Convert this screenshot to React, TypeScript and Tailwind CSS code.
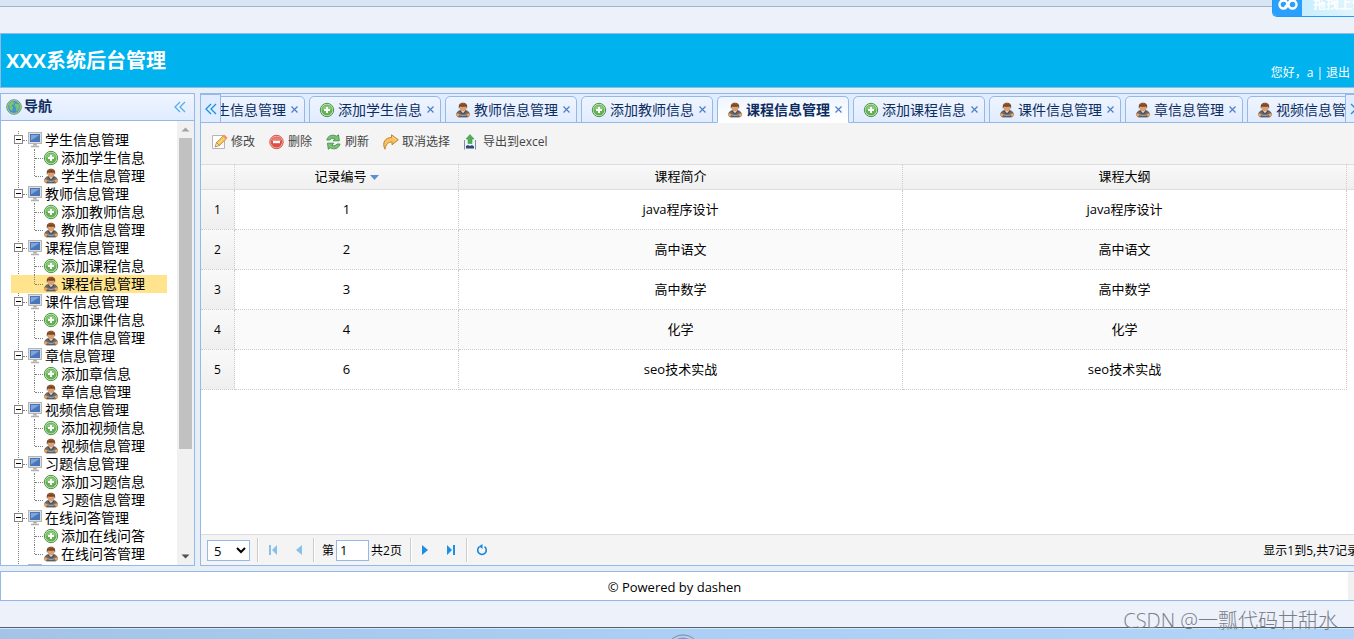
import { useState } from "react";

const groups = [
  { title: "学生信息管理", items: ["添加学生信息", "学生信息管理"] },
  { title: "教师信息管理", items: ["添加教师信息", "教师信息管理"] },
  { title: "课程信息管理", items: ["添加课程信息", "课程信息管理"] },
  { title: "课件信息管理", items: ["添加课件信息", "课件信息管理"] },
  { title: "章信息管理", items: ["添加章信息", "章信息管理"] },
  { title: "视频信息管理", items: ["添加视频信息", "视频信息管理"] },
  { title: "习题信息管理", items: ["添加习题信息", "习题信息管理"] },
  { title: "在线问答管理", items: ["添加在线问答", "在线问答管理"] },
];

const tabs = [
  "学生信息管理",
  "添加学生信息",
  "教师信息管理",
  "添加教师信息",
  "课程信息管理",
  "添加课程信息",
  "课件信息管理",
  "章信息管理",
  "视频信息管理",
];

const rows = [
  { id: 1, name: "java程序设计" },
  { id: 2, name: "高中语文" },
  { id: 3, name: "高中数学" },
  { id: 4, name: "化学" },
  { id: 6, name: "seo技术实战" },
];

function AddIcon() {
  return (
    <svg width="16" height="16" viewBox="0 0 16 16" className="shrink-0">
      <circle cx="8" cy="8" r="6.7" fill="#d5ecca" stroke="#4f9446" />
      <circle cx="8" cy="8" r="5.6" fill="#62b254" />
      <path d="M3 7.500a5.100 5.100 0 0 1 10 0z" fill="#8acb7b" />
      <path d="M8 5v6M5 8h6" stroke="#fff" strokeWidth="2" />
    </svg>
  );
}

function UserIcon() {
  return (
    <svg width="16" height="16" viewBox="0 0 16 16" className="shrink-0">
      <path d="M1.500 13.500c-.2-2.500 1-4.200 3.500-5h6c2.500.8 3.700 2.500 3.500 5l-2 1.500h-9z" fill="#6a6a6c" stroke="#47474a" strokeWidth=".7" />
      <path d="M5.800 8.500L8 11l2.200-2.500z" fill="#f2f2f2" />
      <path d="M5 9l2.500 3M11 9l-2.500 3" stroke="#3b3b3e" strokeWidth=".8" />
      <path d="M4 12.500c2.500 1.300 5.500 1.300 8 0" stroke="#a2a2a5" fill="none" />
      <circle cx="2.500" cy="13" r="1.700" fill="#e8a05c" />
      <circle cx="13.500" cy="13" r="1.700" fill="#e8a05c" />
      <path d="M4.800 4h6.400v2.500c0 1.700-1.300 3-3.200 3s-3.200-1.300-3.200-3z" fill="#d9a077" />
      <path d="M4 7C3.200 3 4.500.8 8 .8S12.800 3 12 7l-1-2.500c-2 .4-4 .4-6 0z" fill="#7b4520" />
      <path d="M5.500 2.500c1.500-1 3.500-1 5 0" stroke="#a1683b" fill="none" />
    </svg>
  );
}

function ComputerIcon() {
  return (
    <svg width="16" height="16" viewBox="0 0 16 16" className="shrink-0">
      <rect x=".5" y=".5" width="13" height="11" fill="#dedede" stroke="#b6b6b6" />
      <rect x="2" y="2" width="10" height="8" fill="#4876bb" />
      <path d="M3 3h8.500L3 8.500z" fill="#7fa4da" />
      <path d="M5.500 12h3l.7 1.500H4.800z" fill="#aaa" />
      <path d="M3 14.500h8" stroke="#b0b0b0" strokeWidth="1.500" />
    </svg>
  );
}

function GlobeIcon() {
  return (
    <svg width="16" height="16" viewBox="0 0 16 16" className="shrink-0">
      <circle cx="8" cy="8" r="7.300" fill="#9fc9a0" stroke="#6a9f73" />
      <circle cx="8" cy="8" r="5.900" fill="#4690cd" />
      <path d="M3 5l3-2.500 2.500.5-1 2.500-2 1 1.500 2-1 3.500L3.500 10z" fill="#7ec46c" />
      <path d="M9 4.500l3.500.5 1 3.500-2.500 4-1.500-1.500 1-2-2-2z" fill="#7ec46c" />
    </svg>
  );
}

function EditIcon() {
  return (
    <svg width="16" height="16" viewBox="0 0 16 16">
      <path d="M.5 1.500h12v13H.5z" fill="#fdfdfd" stroke="#b5b5b5" />
      <path d="M4.500 8.500l7-6.800 3 3-7 6.800z" fill="#f6c44f" stroke="#c98a2a" strokeWidth=".8" />
      <path d="M6 10l7-6.800" stroke="#fbe29b" strokeWidth=".9" />
      <path d="M11 2.200l1.500-1.400 3 3L14 5.200z" fill="#ea8f72" />
      <path d="M4.500 8.500L3 13l4.500-1.500z" fill="#f7e0b5" stroke="#8d6734" strokeWidth=".6" />
    </svg>
  );
}

function RemoveIcon() {
  return (
    <svg width="16" height="16" viewBox="0 0 16 16">
      <circle cx="7.500" cy="8" r="6.700" fill="#f6c3bd" stroke="#cf5147" />
      <circle cx="7.500" cy="8" r="5.600" fill="#dc4f43" />
      <path d="M2.500 7a5.200 5.200 0 0 1 10 0z" fill="#ea7d73" />
      <path d="M4 8h7" stroke="#fff" strokeWidth="2.400" />
    </svg>
  );
}

function ReloadIcon() {
  return (
    <svg width="16" height="16" viewBox="0 0 16 16" fill="#7cc474" stroke="#3f8f4a" strokeWidth=".9" strokeLinejoin="round">
      <path d="M.8 6C1.800 1.500 6.500 0 10.500 2.200L12.500.8l.8 6H7.200l1.700-2.200C6.700 3.700 4.700 4.300 3.800 6z" />
      <path d="M14 10c-1 4.500-5.700 6-9.700 3.800l-2 1.400-.8-6h6.100l-1.700 2.200c2.200.9 4.200.3 5.100-1.400z" />
    </svg>
  );
}

function RedoIcon() {
  return (
    <svg width="16" height="16" viewBox="0 0 16 16">
      <path d="M8.500.8l6.800 5-6.300 5V8C5.500 7.800 2.500 10.500 2 15.200-1.500 8.500 2.500 3.500 8.500 3.500z" fill="#f9c05c" stroke="#b97a26" strokeWidth=".9" strokeLinejoin="round" />
      <path d="M9.500 3l3.500 2.800" stroke="#fde3ab" />
    </svg>
  );
}

function ExportIcon() {
  return (
    <svg width="16" height="16" viewBox="0 0 16 16">
      <path d="M1 6v9h10V6" fill="#eef3f8" />
      <path d="M.5 6v9.500M11.500 6v9.500" stroke="#7d8fa3" />
      <path d="M2 14.500v-2.500l2-1 2 1 2-1 2 1.500v2z" fill="#2f4a78" />
      <path d="M6 .5l4 4.500H8V9.500H4V5H2z" fill="#4fb052" stroke="#378a40" strokeWidth=".5" />
    </svg>
  );
}

function Chevrons({ flip = false }: { flip?: boolean }) {
  return (
    <svg width="12" height="12" viewBox="0 0 12 12" className="shrink-0" fill="none" stroke="#1e90e0" strokeWidth="1.300">
      {flip ? <path d="M1 1l5 5-5 5M6 1l5 5-5 5" /> : <path d="M6 1L1 6l5 5M11 1L6 6l5 5" />}
    </svg>
  );
}

const tools = [
  { label: "修改", icon: <EditIcon /> },
  { label: "删除", icon: <RemoveIcon /> },
  { label: "刷新", icon: <ReloadIcon /> },
  { label: "取消选择", icon: <RedoIcon /> },
  { label: "导出到excel", icon: <ExportIcon /> },
];

function Sidebar({ active, onOpen }: { active: string; onOpen: (name: string) => void }) {
  return (
    <aside className="flex w-[195px] shrink-0 flex-col border border-[#95b8e7] bg-white">
      <div className="flex h-[27px] shrink-0 items-center gap-[2px] border-b border-[#95b8e7] bg-linear-to-b from-[#eff5ff] to-[#e0ecff] pr-2 pl-[5px]">
        <GlobeIcon />
        <h2 className="flex-1 pb-[2px] text-[14px] leading-5 font-bold text-[#0e2d5f]">导航</h2>
        <button aria-label="折叠导航" className="opacity-70">
          <Chevrons />
        </button>
      </div>
      <div className="flex min-h-0 flex-1 overflow-hidden">
        <nav className="flex-1 px-[10px] pt-[10px] text-[14px] leading-[18px] text-black">
          <ul className="bg-[linear-gradient(#808080_50%,transparent_50%)] bg-[length:1px_2px] bg-[position:7px_0] bg-repeat-y">
            {groups.map((g) => (
              <li key={g.title}>
                <div className="flex h-[18px] items-center pl-[3px]">
                  <button aria-label={"折叠" + g.title} className="mb-px flex h-[9px] w-[9px] items-center justify-center border border-[#848484] bg-white">
                    <span className="h-px w-[5px] bg-black" />
                  </button>
                  <span className="mr-px w-1 border-t border-dotted border-[#808080]" />
                  <ComputerIcon />
                  <span className="pl-px">{g.title}</span>
                </div>
                <ul>
                  {g.items.map((name, i) => (
                    <li key={name} className={name === active ? "bg-[#ffe48d]" : ""}>
                      <a
                        href="#"
                        onClick={(e) => {
                          e.preventDefault();
                          onOpen(name);
                        }}
                        className="flex h-[18px] items-center pl-[23px]"
                      >
                        <span className={i === 0 ? "h-full border-l border-dotted border-[#808080]" : "h-[9px] self-start border-l border-dotted border-[#808080]"} />
                        <span className="w-2 border-t border-dotted border-[#808080]" />
                        {i === 0 ? <AddIcon /> : <UserIcon />}
                        <span className="pl-[2px]">{name}</span>
                      </a>
                    </li>
                  ))}
                </ul>
              </li>
            ))}
            <li className="h-[18px] pt-px pl-[17px]">
              <ComputerIcon />
            </li>
          </ul>
        </nav>
        <div className="flex w-[17px] flex-col items-center bg-[#f1f1f1]">
          <svg width="17" height="17" viewBox="0 0 17 17" fill="#a3a3a3">
            <path d="M8.500 6.500l4 4h-8z" />
          </svg>
          <div className="h-[311px] w-[13px] bg-[#c1c1c1]" />
          <svg width="17" height="17" viewBox="0 0 17 17" fill="#505050" className="mt-auto">
            <path d="M8.500 10.500l-4-4h8z" />
          </svg>
        </div>
      </div>
    </aside>
  );
}

function TabBar({ active, onOpen }: { active: string; onOpen: (name: string) => void }) {
  return (
    <div className="flex h-[29px] shrink-0 border-b border-[#95b8e7] bg-[#e0ecff]">
      <button aria-label="向左滚动" className="z-10 flex w-5 shrink-0 items-center justify-center border-t border-r border-[#95b8e7] bg-[#e0ecff]">
        <Chevrons />
      </button>
      <div className="-mb-px flex min-w-0 flex-1 items-end overflow-hidden">
        <div className="-ml-[48px] flex gap-1">
          {tabs.map((name) => (
            <div
              key={name}
              className={
                "flex h-[27px] shrink-0 items-center rounded-t-[5px] border border-[#95b8e7] pr-[5px] pl-[9px] text-[#0e2d5f] " +
                (name === active ? "border-b-white bg-linear-to-b from-[#eff5ff] to-white font-bold" : "bg-linear-to-b from-[#eff5ff] to-[#e0ecff]")
              }
            >
              <button onClick={() => onOpen(name)} className="flex items-center gap-[3px] text-[14px] leading-5 whitespace-nowrap">
                {name.startsWith("添加") ? <AddIcon /> : <UserIcon />}
                {name}
              </button>
              <button aria-label={"关闭" + name} className="ml-1 p-px">
                <svg width="7" height="7" viewBox="0 0 7 7" stroke="#4f7fc0" strokeWidth="1.200">
                  <path d="M.5.5l6 6M6.500.5l-6 6" />
                </svg>
              </button>
            </div>
          ))}
        </div>
      </div>
      <button aria-label="向右滚动" className="flex w-[9px] shrink-0 items-center overflow-hidden border-t border-l border-[#95b8e7] bg-[#e0ecff] pl-1">
        <Chevrons flip />
      </button>
    </div>
  );
}

function Grid() {
  return (
    <table className="w-full table-fixed border-separate border-spacing-0 text-center text-[13px] text-black">
      <colgroup>
        <col className="w-[34px]" />
        <col className="w-[224px]" />
        <col />
        <col />
        <col className="w-[7px]" />
      </colgroup>
      <thead>
        <tr className="h-[26px] bg-linear-to-b from-[#f9f9f9] to-[#efefef] *:border-y *:border-y-[#ddd] *:p-0 *:font-normal">
          <th className="border-r border-r-[#ccc] [border-right-style:dotted]" />
          <th className="border-r border-r-[#ccc] [border-right-style:dotted]">
            <button className="inline-flex items-center gap-[3px]">
              记录编号
              <svg width="9" height="5" viewBox="0 0 9 5" fill="#5a8fd6">
                <path d="M0 0h9L4.500 5z" />
              </svg>
            </button>
          </th>
          <th className="border-r border-r-[#ccc] [border-right-style:dotted]">课程简介</th>
          <th className="border-r border-r-[#ccc] [border-right-style:dotted]">课程大纲</th>
          <th />
        </tr>
      </thead>
      <tbody>
        {rows.map((r, i) => (
          <tr key={r.id} className="h-10">
            <td className="border-r border-b border-dotted border-[#ccc] bg-linear-to-b from-[#f9f9f9] to-[#efefef] p-0 text-[12px]">{i + 1}</td>
            <td className={"border-r border-b border-dotted border-[#ccc] p-0 " + (i % 2 ? "bg-[#fafafa]" : "")}>{r.id}</td>
            <td className={"border-r border-b border-dotted border-[#ccc] p-0 " + (i % 2 ? "bg-[#fafafa]" : "")}>{r.name}</td>
            <td className={"border-r border-b border-dotted border-[#ccc] p-0 " + (i % 2 ? "bg-[#fafafa]" : "")}>{r.name}</td>
            <td className="p-0" />
          </tr>
        ))}
      </tbody>
    </table>
  );
}

function Divider() {
  return <span className="h-6 w-[2px] shrink-0 border-r border-l border-r-white border-l-[#ccc]" />;
}

function Pager() {
  return (
    <div className="flex h-[31px] shrink-0 items-center overflow-hidden border-t border-[#ddd] bg-[#f4f4f4] pl-[6px] text-[12px] whitespace-nowrap text-black">
      <select aria-label="每页条数" defaultValue="5" className="mr-[7px] h-[21px] w-[43px] border border-[#95b8e7] bg-white pb-[2px] pl-[2px] text-[13px]">
        <option>5</option>
        <option>10</option>
        <option>20</option>
      </select>
      <Divider />
      <button aria-label="第一页" className="ml-px flex w-[26px] justify-center opacity-50">
        <svg width="10" height="10" viewBox="0 0 10 10" fill="#1a8fe6">
          <path d="M1 0h2v10H1zM9 0v10L4 5z" />
        </svg>
      </button>
      <button aria-label="上一页" className="flex w-[26px] justify-center opacity-50">
        <svg width="10" height="10" viewBox="0 0 10 10" fill="#1a8fe6">
          <path d="M8 0v10L2 5z" />
        </svg>
      </button>
      <span className="w-px" />
      <Divider />
      <label className="ml-[7px] flex items-center gap-[2px] pt-px">
        第
        <input defaultValue="1" className="mb-px h-[21px] w-[33px] border border-[#95b8e7] bg-white px-[3px] pb-px text-[13px]" />
      </label>
      <span className="mr-2 ml-[2px] pt-px">共2页</span>
      <Divider />
      <button aria-label="下一页" className="flex w-[26px] justify-center">
        <svg width="10" height="10" viewBox="0 0 10 10" fill="#1a8fe6">
          <path d="M2 0v10l6-5z" />
        </svg>
      </button>
      <button aria-label="最后一页" className="mr-[2px] flex w-[26px] justify-center">
        <svg width="10" height="10" viewBox="0 0 10 10" fill="#1a8fe6">
          <path d="M1 0v10l5-5zM7 0h2v10H7z" />
        </svg>
      </button>
      <Divider />
      <button aria-label="刷新列表" className="flex w-7 justify-center">
        <svg width="12" height="12" viewBox="0 0 12 12">
          <path d="M3.500 2.700A4.300 4.300 0 1 0 8.500 2.700" fill="none" stroke="#1a86d8" strokeWidth="1.600" />
          <path d="M6.500 0v5L3 2.200z" fill="#1a86d8" />
        </svg>
      </button>
      <span className="-mr-[5px] ml-auto pt-[2px]">显示1到5,共7记录</span>
    </div>
  );
}

export default function App() {
  const [active, setActive] = useState("课程信息管理");

  return (
    <div className="relative flex h-screen flex-col overflow-hidden bg-[#edf1fa] font-['Open_Sans','Noto_Sans_CJK_SC',sans-serif]">
      <div className="h-[7px] shrink-0 border-b border-[#9fb3d1] bg-[#d8e6f3]" />

      {/* netdisk upload widget */}
      <div className="absolute top-[-12px] right-0 flex h-[29px] w-[82px] overflow-hidden rounded-bl-[5px] border-b border-l border-[#1e9bff] bg-linear-to-r from-[#b9e8fb] to-[#e0f6fe]">
        <div className="flex w-[29px] shrink-0 items-center justify-center bg-[#2ba0fb]">
          <svg width="20" height="20" viewBox="0 0 20 20" fill="none" stroke="#fff" strokeWidth="2.400">
            <circle cx="5.500" cy="12.500" r="4" />
            <circle cx="14.500" cy="12.500" r="4" />
            <path d="M6 8.500a4 4 0 0 1 8 0M12.500 8.500l-6 7.500" />
          </svg>
        </div>
        <button className="pl-[11px] text-[13px] leading-[31px] font-bold whitespace-nowrap text-white">拖拽上传</button>
      </div>

      <header className="mt-[26px] flex h-[55px] shrink-0 justify-between border border-r-0 border-[#95b8e7] bg-[#00b2ee] pr-1 pl-[5px] text-white">
        <h1 className="self-center text-[20px] font-bold">XXX系统后台管理</h1>
        <div className="flex gap-[3px] self-end pb-[5px] text-[12px] leading-[18px]">
          <span>您好，a</span>
          <span>|</span>
          <a href="#">退出</a>
        </div>
      </header>

      <div className="flex min-h-0 flex-1 gap-[5px] bg-[#e6eef8] py-[5px]">
        <Sidebar active={active} onOpen={setActive} />
        <main className="flex min-w-0 flex-1 flex-col border border-r-0 border-[#95b8e7] bg-white">
          <TabBar active={active} onOpen={setActive} />
          <div className="flex h-[41px] shrink-0 items-start gap-[14px] bg-[#f4f4f4] pt-[10px] pl-[11px] text-[12px] leading-[18px] text-[#444]">
            {tools.map((t) => (
              <button key={t.label} className="flex items-center gap-[3px]">
                {t.icon}
                {t.label}
              </button>
            ))}
          </div>
          <div className="min-h-0 flex-1 overflow-hidden">
            <Grid />
          </div>
          <Pager />
        </main>
      </div>

      <footer className="flex h-[30px] shrink-0 border border-r-0 border-[#95b8e7] bg-white text-[13px] text-black">
        <p className="flex-1 self-center pt-1 text-center">© Powered by dashen</p>
        <div className="w-[6px] bg-[#f1f1f1]" />
      </footer>

      {/* desktop taskbar edge */}
      <div className="mt-[26px] shrink-0 border-t border-[#56616f]">
        <div className="flex h-[11px] justify-center overflow-hidden border-t border-[#d5e6f7] bg-linear-to-r from-[#a3c4e6] via-[#abcff5] to-[#b3d4f8]">
          <svg width="36" height="36" viewBox="0 0 36 36" className="mt-[5px] ml-3">
            <circle cx="18" cy="18" r="17" fill="#b6cff0" stroke="#7c8798" />
            <circle cx="18" cy="18" r="14.500" fill="#7f94dd" />
          </svg>
        </div>
      </div>

      <div className="pointer-events-none absolute right-4 bottom-1 text-[20px] leading-7 font-light text-[#787e88]">CSDN @一瓢代码甘甜水</div>
    </div>
  );
}
